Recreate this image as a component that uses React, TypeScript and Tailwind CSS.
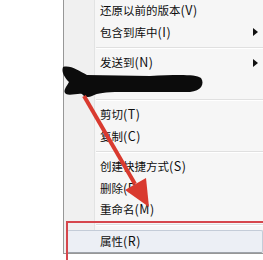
type Item = { label?: string; key?: string; sub?: boolean; sep?: boolean; active?: boolean };

const items: Item[] = [
  { label: "还原以前的版本", key: "(V)" },
  { label: "包含到库中", key: "(I)", sub: true },
  { sep: true },
  { label: "发送到", key: "(N)", sub: true },
  { label: "" },
  { sep: true },
  { label: "剪切", key: "(T)" },
  { label: "复制", key: "(C)" },
  { sep: true },
  { label: "创建快捷方式", key: "(S)" },
  { label: "删除", key: "(D)" },
  { label: "重命名", key: "(M)" },
  { sep: true },
  { label: "属性", key: "(R)", active: true },
];

function Label({ item }: { item: Item }) {
  return (
    <span className="whitespace-nowrap text-[11.5px] text-[#0e0e0e]">
      {item.label}
      {item.key && <span className="text-[12.5px] tracking-[0.5px]">{item.key}</span>}
    </span>
  );
}

function Row({ item }: { item: Item }) {
  if (item.sep) {
    return (
      <div className="flex h-[9px]">
        <div className="w-[31px] shrink-0 border-r border-[#e2e3e3] bg-[#f0f0f0]" />
        <div className="flex flex-1 flex-col justify-center pl-[1px]">
          <div className="h-px bg-[#e0e0e0]" />
          <div className="h-px bg-white" />
        </div>
      </div>
    );
  }
  if (item.active) {
    return (
      <div className="flex h-[23px] bg-[#f0f0f0] pl-[3px]">
        <div className="flex flex-1 items-center rounded-[2px] border border-[#c4ccd8] border-b-[#9ea3aa] bg-[#eceff5] pl-[32px]">
          <Label item={item} />
        </div>
      </div>
    );
  }
  return (
    <div className="flex h-[21.5px]">
      <div className="w-[31px] shrink-0 border-r border-[#e2e3e3] bg-[#f0f0f0]" />
      <div className="flex flex-1 items-center justify-between pl-[5px] pr-[5px]">
        <Label item={item} />
        {item.sub && (
          <svg width="5" height="8" viewBox="0 0 5 8">
            <path d="M0 0 L5 4 L0 8 Z" fill="#111" />
          </svg>
        )}
      </div>
    </div>
  );
}

export default function App() {
  return (
    <div
      className="relative h-[260px] w-[263px] overflow-hidden bg-white"
      style={{ fontFamily: '"Noto Sans CJK SC", "Noto Sans", sans-serif' }}
    >
      <div className="flex h-full">
        <div className="w-[63px] shrink-0" />
        <div className="flex h-[254px] flex-1 flex-col border-l border-b border-[#979797] bg-[#f6f6f6]">
          {items.map((item, i) => (
            <Row key={i} item={item} />
          ))}
        </div>
      </div>

      {/* red highlight box */}
      <div className="absolute left-[66px] top-[221px] h-[60px] w-[220px] border-2 border-[#d6464c]" />

      {/* black scribble + red arrow */}
      <svg className="absolute left-0 top-0" width="263" height="260" viewBox="0 0 263 260">
        <path
          d="M63 67 C71 65 79 71 87 75 L150 76 C175 75 195 74 201 78 C205 84 201 91 190 92 L120 92 C105 92 98 93 92 96 C88 98 84 97 82 94 C78 93 70 96 66 94 C62 91 67 86 69 82 C65 78 61 72 63 67 Z"
          fill="#0c0c0c"
        />
        <line x1="84" y1="96" x2="135" y2="184" stroke="#d93a2f" strokeWidth="4" />
        <path d="M149 207 L146 178 L125 190 Z" fill="#d93a2f" />
      </svg>
    </div>
  );
}
